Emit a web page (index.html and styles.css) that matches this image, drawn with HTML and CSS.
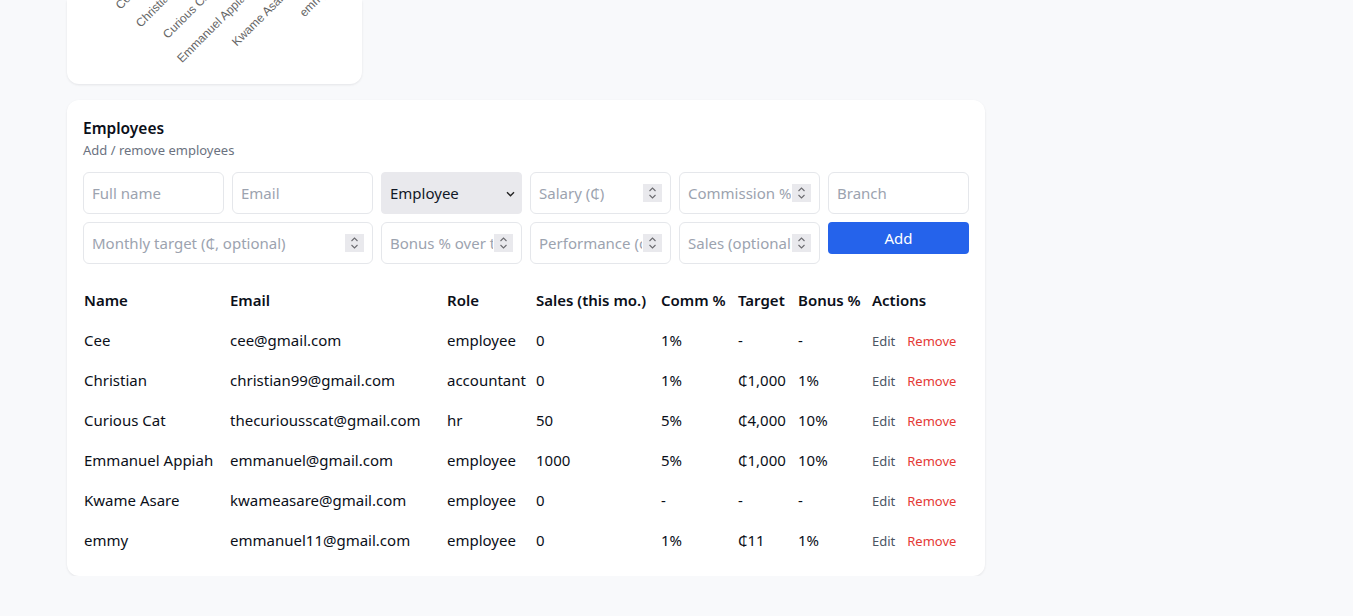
FILE: index.html
```html
<!DOCTYPE html>
<html lang="en">
<head>
<meta charset="utf-8">
<title>Employees</title>
<link rel="stylesheet" href="styles.css">
</head>
<body>
<main class="page">
  <section class="card chart-card">
    <svg class="chart" width="295" height="84" viewBox="0 0 295 84">
      <g class="ticks">
        <text x="69" y="-5.6" transform="rotate(-45 69 -5.6)">Cee</text>
        <text x="107.3" y="-5.6" transform="rotate(-45 107.3 -5.6)">Christian</text>
        <text x="145.6" y="-5.6" transform="rotate(-45 145.6 -5.6)">Curious Cat</text>
        <text x="183.9" y="-5.6" transform="rotate(-45 183.9 -5.6)">Emmanuel Appiah</text>
        <text x="222.2" y="-5.6" transform="rotate(-45 222.2 -5.6)">Kwame Asare</text>
        <text x="260.5" y="-5.6" transform="rotate(-45 260.5 -5.6)">emmy</text>
      </g>
    </svg>
  </section>

  <section class="card employees">
    <h2 class="title">Employees</h2>
    <p class="subtitle">Add / remove employees</p>

    <form class="emp-form">
      <input class="field" type="text" placeholder="Full name">
      <input class="field" type="text" placeholder="Email">
      <div class="select-wrap">
        <select class="select">
          <option>Employee</option>
        </select>
        <svg class="chevron" width="9" height="6" viewBox="0 0 9 6"><path d="M1 1.2l3.5 3.5 3.5-3.5" fill="none" stroke="#222" stroke-width="1.4"/></svg>
      </div>
      <div class="num-wrap">
        <input class="field num" type="text" placeholder="Salary (₵)">
        <span class="spin"><svg width="19" height="18" viewBox="0 0 19 18"><path d="M6.5 7l3-3 3 3M6.5 11l3 3 3-3" fill="none" stroke="#6b6b70" stroke-width="1.1"/></svg></span>
      </div>
      <div class="num-wrap">
        <input class="field num" type="text" placeholder="Commission %">
        <span class="spin"><svg width="19" height="18" viewBox="0 0 19 18"><path d="M6.5 7l3-3 3 3M6.5 11l3 3 3-3" fill="none" stroke="#6b6b70" stroke-width="1.1"/></svg></span>
      </div>
      <input class="field" type="text" placeholder="Branch">

      <div class="num-wrap span-2">
        <input class="field num" type="text" placeholder="Monthly target (₵, optional)">
        <span class="spin"><svg width="19" height="18" viewBox="0 0 19 18"><path d="M6.5 7l3-3 3 3M6.5 11l3 3 3-3" fill="none" stroke="#6b6b70" stroke-width="1.1"/></svg></span>
      </div>
      <div class="num-wrap">
        <input class="field num" type="text" placeholder="Bonus % over target">
        <span class="spin"><svg width="19" height="18" viewBox="0 0 19 18"><path d="M6.5 7l3-3 3 3M6.5 11l3 3 3-3" fill="none" stroke="#6b6b70" stroke-width="1.1"/></svg></span>
      </div>
      <div class="num-wrap">
        <input class="field num" type="text" placeholder="Performance (optional)">
        <span class="spin"><svg width="19" height="18" viewBox="0 0 19 18"><path d="M6.5 7l3-3 3 3M6.5 11l3 3 3-3" fill="none" stroke="#6b6b70" stroke-width="1.1"/></svg></span>
      </div>
      <div class="num-wrap">
        <input class="field num" type="text" placeholder="Sales (optional)">
        <span class="spin"><svg width="19" height="18" viewBox="0 0 19 18"><path d="M6.5 7l3-3 3 3M6.5 11l3 3 3-3" fill="none" stroke="#6b6b70" stroke-width="1.1"/></svg></span>
      </div>
      <button class="add-btn" type="button">Add</button>
    </form>

    <table class="emp-table">
      <colgroup>
        <col class="c-name"><col class="c-email"><col class="c-role"><col class="c-sales"><col class="c-comm"><col class="c-target"><col class="c-bonus"><col class="c-actions">
      </colgroup>
      <thead>
        <tr><th>Name</th><th>Email</th><th>Role</th><th>Sales (this mo.)</th><th>Comm %</th><th>Target</th><th>Bonus %</th><th>Actions</th></tr>
      </thead>
      <tbody>
        <tr><td>Cee</td><td>cee@gmail.com</td><td>employee</td><td>0</td><td>1%</td><td>-</td><td>-</td><td><a class="edit">Edit</a><a class="remove">Remove</a></td></tr>
        <tr><td>Christian</td><td>christian99@gmail.com</td><td>accountant</td><td>0</td><td>1%</td><td>₵1,000</td><td>1%</td><td><a class="edit">Edit</a><a class="remove">Remove</a></td></tr>
        <tr><td>Curious Cat</td><td>thecuriousscat@gmail.com</td><td>hr</td><td>50</td><td>5%</td><td>₵4,000</td><td>10%</td><td><a class="edit">Edit</a><a class="remove">Remove</a></td></tr>
        <tr><td>Emmanuel Appiah</td><td>emmanuel@gmail.com</td><td>employee</td><td>1000</td><td>5%</td><td>₵1,000</td><td>10%</td><td><a class="edit">Edit</a><a class="remove">Remove</a></td></tr>
        <tr><td>Kwame Asare</td><td>kwameasare@gmail.com</td><td>employee</td><td>0</td><td>-</td><td>-</td><td>-</td><td><a class="edit">Edit</a><a class="remove">Remove</a></td></tr>
        <tr><td>emmy</td><td>emmanuel11@gmail.com</td><td>employee</td><td>0</td><td>1%</td><td>₵11</td><td>1%</td><td><a class="edit">Edit</a><a class="remove">Remove</a></td></tr>
      </tbody>
    </table>
  </section>
</main>
</body>
</html>
```

FILE: styles.css
```css
* { box-sizing: border-box; }

html, body {
  margin: 0;
  background: #f8f9fb;
}

body {
  font-family: "Noto Sans", "Open Sans", sans-serif;
  color: #0b0f19;
  font-size: 15px;
}

.page {
  display: flex;
  flex-direction: column;
  align-items: flex-start;
  gap: 16px;
  padding-left: 67px;
}

.card {
  background: #ffffff;
  border-radius: 12px;
  box-shadow: 0 1px 3px rgba(17, 24, 39, 0.06), 0 1px 2px rgba(17, 24, 39, 0.03);
}

.chart-card {
  width: 295px;
  height: 84px;
  border-radius: 0 0 12px 12px;
}

.chart {
  display: block;
  overflow: visible;
}

.ticks text {
  font-family: "Liberation Sans", Arial, sans-serif;
  font-size: 12px;
  fill: #666666;
  text-anchor: end;
}

.employees {
  width: 918px;
  padding: 16px;
}

.title {
  margin: 0;
  font-size: 15.5px;
  line-height: 24px;
  font-weight: 600;
}

.subtitle {
  margin: 0;
  font-size: 13px;
  line-height: 20px;
  color: #6b7280;
}

.emp-form {
  margin-top: 12px;
  display: grid;
  grid-template-columns: repeat(6, 1fr);
  gap: 8px;
  align-items: start;
}

.field {
  display: block;
  width: 100%;
  height: 42px;
  border: 1px solid #e5e7eb;
  border-radius: 6px;
  padding: 0 8px;
  font: inherit;
  font-size: 15px;
  color: #111827;
  background: #fff;
  outline: none;
}

.field::placeholder {
  color: #9ca3af;
  opacity: 1;
}

.num-wrap {
  position: relative;
}

.num-wrap .field.num {
  padding-right: 28px;
}

.span-2 {
  grid-column: span 2;
}

.spin {
  position: absolute;
  right: 9px;
  top: 12px;
  width: 19px;
  height: 18px;
  background: #e9e9ed;
  display: block;
  pointer-events: none;
}

.spin svg {
  display: block;
}

.select-wrap {
  position: relative;
}

.select {
  display: block;
  width: 100%;
  height: 42px;
  appearance: none;
  -webkit-appearance: none;
  border: 1px solid #e9e9ed;
  border-radius: 4px;
  background: #e9e9ed;
  padding: 0 8px;
  font: inherit;
  font-size: 15px;
  color: #111827;
}

.chevron {
  position: absolute;
  right: 7px;
  top: 19px;
  pointer-events: none;
}

.add-btn {
  height: 32px;
  width: 100%;
  border: none;
  border-radius: 4px;
  background: #2563eb;
  color: #ffffff;
  font: inherit;
  font-size: 15px;
}

.emp-table {
  margin-top: 16px;
  width: 100%;
  border-collapse: collapse;
  table-layout: fixed;
}

.c-name { width: 146px; }
.c-email { width: 217px; }
.c-role { width: 89px; }
.c-sales { width: 125px; }
.c-comm { width: 77px; }
.c-target { width: 60px; }
.c-bonus { width: 74px; }
.c-actions { width: 98px; }

.emp-table th,
.emp-table td {
  height: 40px;
  padding: 0 0 1px 1px;
  text-align: left;
  vertical-align: middle;
  white-space: nowrap;
  font-size: 15px;
}

.emp-table th {
  font-weight: 600;
}

.edit,
.remove {
  font-size: 13px;
  cursor: pointer;
}

.edit {
  color: #4b5563;
}

.remove {
  color: #e53935;
  margin-left: 12px;
}
```
